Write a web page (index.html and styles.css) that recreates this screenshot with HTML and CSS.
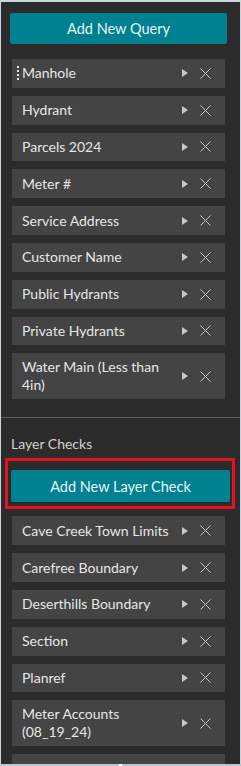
FILE: index.html
```html
<!DOCTYPE html>
<html lang="en">
<head>
  <meta charset="UTF-8">
  <meta name="viewport" content="width=device-width, initial-scale=1.0">
  <title>Query Settings</title>
  <link rel="stylesheet" href="styles.css">
</head>
<body>
  <div class="frame">
    <div class="panel">
      <section class="block">
        <button type="button" class="add-button">Add New Query</button>
        <ul class="item-list">
          <li class="item"><span class="handle"></span><span class="name">Manhole</span><span class="play"></span><span class="remove"><svg width="11" height="11" viewBox="0 0 11 11"><path d="M0.5 0.5L10.5 10.5M10.5 0.5L0.5 10.5" stroke="#c4c4c4" stroke-width="1"/></svg></span></li>
          <li class="item"><span class="name">Hydrant</span><span class="play"></span><span class="remove"><svg width="11" height="11" viewBox="0 0 11 11"><path d="M0.5 0.5L10.5 10.5M10.5 0.5L0.5 10.5" stroke="#c4c4c4" stroke-width="1"/></svg></span></li>
          <li class="item"><span class="name">Parcels 2024</span><span class="play"></span><span class="remove"><svg width="11" height="11" viewBox="0 0 11 11"><path d="M0.5 0.5L10.5 10.5M10.5 0.5L0.5 10.5" stroke="#c4c4c4" stroke-width="1"/></svg></span></li>
          <li class="item"><span class="name">Meter #</span><span class="play"></span><span class="remove"><svg width="11" height="11" viewBox="0 0 11 11"><path d="M0.5 0.5L10.5 10.5M10.5 0.5L0.5 10.5" stroke="#c4c4c4" stroke-width="1"/></svg></span></li>
          <li class="item"><span class="name">Service Address</span><span class="play"></span><span class="remove"><svg width="11" height="11" viewBox="0 0 11 11"><path d="M0.5 0.5L10.5 10.5M10.5 0.5L0.5 10.5" stroke="#c4c4c4" stroke-width="1"/></svg></span></li>
          <li class="item"><span class="name">Customer Name</span><span class="play"></span><span class="remove"><svg width="11" height="11" viewBox="0 0 11 11"><path d="M0.5 0.5L10.5 10.5M10.5 0.5L0.5 10.5" stroke="#c4c4c4" stroke-width="1"/></svg></span></li>
          <li class="item"><span class="name">Public Hydrants</span><span class="play"></span><span class="remove"><svg width="11" height="11" viewBox="0 0 11 11"><path d="M0.5 0.5L10.5 10.5M10.5 0.5L0.5 10.5" stroke="#c4c4c4" stroke-width="1"/></svg></span></li>
          <li class="item"><span class="name">Private Hydrants</span><span class="play"></span><span class="remove"><svg width="11" height="11" viewBox="0 0 11 11"><path d="M0.5 0.5L10.5 10.5M10.5 0.5L0.5 10.5" stroke="#c4c4c4" stroke-width="1"/></svg></span></li>
          <li class="item"><span class="name">Water Main (Less than 4in)</span><span class="play"></span><span class="remove"><svg width="11" height="11" viewBox="0 0 11 11"><path d="M0.5 0.5L10.5 10.5M10.5 0.5L0.5 10.5" stroke="#c4c4c4" stroke-width="1"/></svg></span></li>
        </ul>
      </section>

      <section class="block checks">
        <h2 class="block-title">Layer Checks</h2>
        <div class="highlight">
          <button type="button" class="add-button">Add New Layer Check</button>
        </div>
        <ul class="item-list">
          <li class="item"><span class="name">Cave Creek Town Limits</span><span class="play"></span><span class="remove"><svg width="11" height="11" viewBox="0 0 11 11"><path d="M0.5 0.5L10.5 10.5M10.5 0.5L0.5 10.5" stroke="#c4c4c4" stroke-width="1"/></svg></span></li>
          <li class="item"><span class="name">Carefree Boundary</span><span class="play"></span><span class="remove"><svg width="11" height="11" viewBox="0 0 11 11"><path d="M0.5 0.5L10.5 10.5M10.5 0.5L0.5 10.5" stroke="#c4c4c4" stroke-width="1"/></svg></span></li>
          <li class="item"><span class="name">Deserthills Boundary</span><span class="play"></span><span class="remove"><svg width="11" height="11" viewBox="0 0 11 11"><path d="M0.5 0.5L10.5 10.5M10.5 0.5L0.5 10.5" stroke="#c4c4c4" stroke-width="1"/></svg></span></li>
          <li class="item"><span class="name">Section</span><span class="play"></span><span class="remove"><svg width="11" height="11" viewBox="0 0 11 11"><path d="M0.5 0.5L10.5 10.5M10.5 0.5L0.5 10.5" stroke="#c4c4c4" stroke-width="1"/></svg></span></li>
          <li class="item"><span class="name">Planref</span><span class="play"></span><span class="remove"><svg width="11" height="11" viewBox="0 0 11 11"><path d="M0.5 0.5L10.5 10.5M10.5 0.5L0.5 10.5" stroke="#c4c4c4" stroke-width="1"/></svg></span></li>
          <li class="item"><span class="name">Meter Accounts (08_19_24)</span><span class="play"></span><span class="remove"><svg width="11" height="11" viewBox="0 0 11 11"><path d="M0.5 0.5L10.5 10.5M10.5 0.5L0.5 10.5" stroke="#c4c4c4" stroke-width="1"/></svg></span></li>
          <li class="item"><span class="name">&nbsp;</span></li>
        </ul>
      </section>
    </div>
    <div class="bottom-bar"><span class="grip"></span></div>
  </div>
</body>
</html>
```

FILE: styles.css
```css
html, body {
  margin: 0;
  height: 100%;
}
body {
  font-family: Lato, "Open Sans", sans-serif;
  background-color: #c9d2de;
  color: #e6e6e6;
}
.frame {
  height: 766px;
  display: flex;
  flex-direction: column;
  border-top: 2px solid #cdd5e0;
  box-sizing: border-box;
}
.panel {
  flex: 1;
  overflow: hidden;
  background-color: #2b2b2b;
  margin: 0 1px;
}
.block {
  padding: 11px 13px 18px 9px;
}
.add-button {
  display: block;
  width: 100%;
  height: 31px;
  background-color: #00818f;
  color: #e8f2f3;
  border: none;
  border-radius: 2px;
  font-family: inherit;
  font-size: 14.5px;
  cursor: pointer;
}
.item-list {
  list-style: none;
  margin: 15px 0 0 2px;
  padding: 0;
  width: 213px;
  display: flex;
  flex-direction: column;
  gap: 8px;
}
.item {
  min-height: 28.8px;
  background-color: #444444;
  display: flex;
  align-items: center;
  padding: 5px 14px 5px 10px;
  box-sizing: border-box;
  font-size: 14px;
  line-height: 18px;
  position: relative;
}
.handle {
  position: absolute;
  left: 5px;
  top: 7px;
  height: 14px;
  border-left: 2px dotted #e0e0e0;
}
.name {
  flex: 1;
  padding-right: 8px;
}
.play {
  width: 0;
  height: 0;
  border-top: 4.5px solid transparent;
  border-bottom: 4.5px solid transparent;
  border-left: 6px solid #c8c8c8;
  margin-right: 12px;
}
.remove {
  display: flex;
}
.checks {
  border-top: 1px solid #5c5c5c;
  padding-top: 17px;
}
.block-title {
  margin: 0 0 6px 1px;
  font-size: 14px;
  font-weight: normal;
  color: #cfcfcf;
}
.highlight {
  border: 3px solid #e3121c;
  margin-left: -5px;
  margin-right: -8px;
  padding: 9px 2px 4px 3px;
}
.highlight .add-button {
  height: 32px;
}
.checks .item-list {
  margin-top: 7px;
}
.bottom-bar {
  height: 2px;
  background-color: #b9c5d5;
  display: flex;
  justify-content: center;
}
.grip {
  width: 3px;
  height: 2px;
  background-color: #ffffff;
}
```
